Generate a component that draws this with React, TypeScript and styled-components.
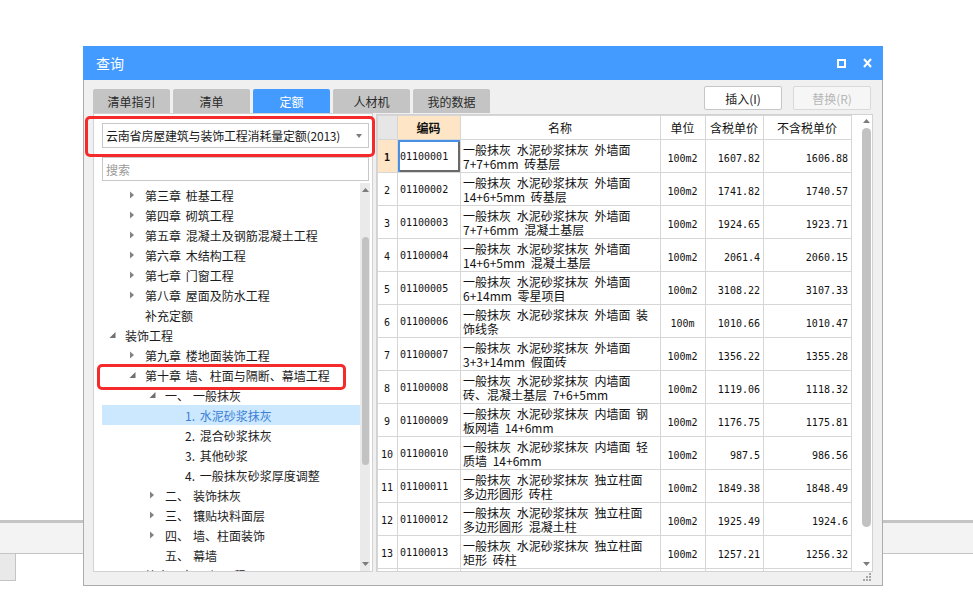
import React from "react";
import styled, { createGlobalStyle } from "styled-components";

type TreeItem = {
    depth: number;
    arrow?: "right" | "down";
    prefix?: string;
    text: string;
    selected?: boolean;
    marked?: boolean;
};

type QuotaRow = {
    n: number;
    code: string;
    l1: string;
    l2: string;
    unit: string;
    tax: string;
    notax: string;
};

const tree: TreeItem[] = [
    { depth: 1, arrow: "right", text: "第三章 桩基工程" },
    { depth: 1, arrow: "right", text: "第四章 砌筑工程" },
    { depth: 1, arrow: "right", text: "第五章 混凝土及钢筋混凝土工程" },
    { depth: 1, arrow: "right", text: "第六章 木结构工程" },
    { depth: 1, arrow: "right", text: "第七章 门窗工程" },
    { depth: 1, arrow: "right", text: "第八章 屋面及防水工程" },
    { depth: 1, text: "补充定额" },
    { depth: 0, arrow: "down", text: "装饰工程" },
    { depth: 1, arrow: "right", text: "第九章 楼地面装饰工程" },
    { depth: 1, arrow: "down", text: "第十章 墙、柱面与隔断、幕墙工程", marked: true },
    { depth: 2, arrow: "down", prefix: "一、", text: "一般抹灰" },
    { depth: 3, text: "1. 水泥砂浆抹灰", selected: true },
    { depth: 3, text: "2. 混合砂浆抹灰" },
    { depth: 3, text: "3. 其他砂浆" },
    { depth: 3, text: "4. 一般抹灰砂浆厚度调整" },
    { depth: 2, arrow: "right", prefix: "二、", text: "装饰抹灰" },
    { depth: 2, arrow: "right", prefix: "三、", text: "镶贴块料面层" },
    { depth: 2, arrow: "right", prefix: "四、", text: "墙、柱面装饰" },
    { depth: 2, prefix: "五、", text: "幕墙" },
    { depth: 1, arrow: "right", text: "第十一章 天棚工程" },
];

const base = "一般抹灰 水泥砂浆抹灰 ";

const rows: QuotaRow[] = [
    { n: 1, code: "01100001", l1: base + "外墙面", l2: "7+7+6mm 砖基层", unit: "100m2", tax: "1607.82", notax: "1606.88" },
    { n: 2, code: "01100002", l1: base + "外墙面", l2: "14+6+5mm 砖基层", unit: "100m2", tax: "1741.82", notax: "1740.57" },
    { n: 3, code: "01100003", l1: base + "外墙面", l2: "7+7+6mm 混凝土基层", unit: "100m2", tax: "1924.65", notax: "1923.71" },
    { n: 4, code: "01100004", l1: base + "外墙面", l2: "14+6+5mm 混凝土基层", unit: "100m2", tax: "2061.4", notax: "2060.15" },
    { n: 5, code: "01100005", l1: base + "外墙面", l2: "6+14mm 零星项目", unit: "100m2", tax: "3108.22", notax: "3107.33" },
    { n: 6, code: "01100006", l1: base + "外墙面 装", l2: "饰线条", unit: "100m", tax: "1010.66", notax: "1010.47" },
    { n: 7, code: "01100007", l1: base + "外墙面", l2: "3+3+14mm 假面砖", unit: "100m2", tax: "1356.22", notax: "1355.28" },
    { n: 8, code: "01100008", l1: base + "内墙面", l2: "砖、混凝土基层 7+6+5mm", unit: "100m2", tax: "1119.06", notax: "1118.32" },
    { n: 9, code: "01100009", l1: base + "内墙面 钢", l2: "板网墙 14+6mm", unit: "100m2", tax: "1176.75", notax: "1175.81" },
    { n: 10, code: "01100010", l1: base + "内墙面 轻", l2: "质墙 14+6mm", unit: "100m2", tax: "987.5", notax: "986.56" },
    { n: 11, code: "01100011", l1: base + "独立柱面", l2: "多边形圆形 砖柱", unit: "100m2", tax: "1849.38", notax: "1848.49" },
    { n: 12, code: "01100012", l1: base + "独立柱面", l2: "多边形圆形 混凝土柱", unit: "100m2", tax: "1925.49", notax: "1924.6" },
    { n: 13, code: "01100013", l1: base + "独立柱面", l2: "矩形 砖柱", unit: "100m2", tax: "1257.21", notax: "1256.32" },
];

const tabs = ["清单指引", "清单", "定额", "人材机", "我的数据"];

const GlobalStyle = createGlobalStyle`
    html, body {
        margin: 0;
        padding: 0;
        background: #ffffff;
    }
    body {
        font-family: "Noto Sans CJK SC", "Noto Sans", sans-serif;
        font-size: 12px;
        color: #202020;
    }
    * {
        box-sizing: border-box;
    }
`;

const Desktop = styled.div`
    position: relative;
    width: 973px;
    height: 615px;
    overflow: hidden;
    background: #ffffff;
`;

// the app window lying behind the dialog
const BackBar = styled.div`
    margin-top: 520px;
    height: 34px;
    background: #f3f3f3;
    border-top: 3px solid #c4c4c4;
    border-bottom: 1px solid #c4c4c4;
`;

const BackTab = styled.div`
    width: 16px;
    height: 27px;
    background: #e9e9e9;
    border-right: 1px solid #c4c4c4;
    border-bottom: 1px solid #c4c4c4;
`;

const Dialog = styled.div`
    position: absolute;
    left: 83px;
    top: 46px;
    width: 800px;
    height: 540px;
    display: flex;
    flex-direction: column;
    background: #f0f0f0;
    border: 1px solid #acacac;
    border-top: none;
`;

const TitleBar = styled.div`
    height: 34px;
    margin: 0 -1px;
    padding: 0 11px 0 13px;
    display: flex;
    align-items: center;
    background: #449bff;
    color: #ffffff;
    font-size: 14px;
`;

const Title = styled.span`
    flex: 1;
`;

const TitleIcons = styled.div`
    display: flex;
    align-items: center;
    gap: 17px;
`;

const Body = styled.div`
    flex: 1;
    display: flex;
    flex-direction: column;
    padding: 6px 9px 0;
`;

const TopRow = styled.div`
    height: 27px;
    display: flex;
`;

const Tabs = styled.div`
    align-self: flex-end;
    display: flex;
    gap: 3px;
`;

const Tab = styled.div<{ $active?: boolean }>`
    width: 77px;
    height: 24px;
    display: flex;
    align-items: center;
    justify-content: center;
    border-radius: 2px 2px 0 0;
    background: ${({ $active }) => ($active ? "#449bff" : "#c4c4c4")};
    color: ${({ $active }) => ($active ? "#ffffff" : "#2a2a2a")};
`;

const Actions = styled.div`
    margin-left: auto;
    margin-right: 2px;
    display: flex;
    gap: 11px;
    align-self: flex-start;
`;

const Button = styled.button`
    width: 78px;
    height: 24px;
    padding: 0;
    font: inherit;
    color: #222222;
    background: #ffffff;
    border: 1px solid #c6c6c6;
    border-radius: 2px;

    &:disabled {
        color: #b6b6b6;
        background: #f6f6f6;
        border-color: #d9d9d9;
    }
`;

const Content = styled.div`
    height: 459px;
    display: flex;
    gap: 3px;
`;

const LeftPanel = styled.div`
    width: 280px;
    display: flex;
    flex-direction: column;
    background: #ffffff;
    border: 1px solid #d2d2d2;
`;

const DropWrap = styled.div`
    position: relative;
    margin: 9px 3px 0 8px;
`;

const Dropdown = styled.div`
    height: 25px;
    display: flex;
    align-items: center;
    justify-content: space-between;
    padding: 0 6px 0 3px;
    border: 1px solid #c8c8c8;
    background: #ffffff;
    color: #1a1a1a;
    white-space: nowrap;
    letter-spacing: -0.2px;
`;

const Highlight = styled.div<{ $top: number; $left: number; $width: number; $height: number }>`
    position: absolute;
    top: ${({ $top }) => $top}px;
    left: ${({ $left }) => $left}px;
    width: ${({ $width }) => $width}px;
    height: ${({ $height }) => $height}px;
    border: 3px solid #f52a2a;
    border-radius: 5px;
    pointer-events: none;
    z-index: 2;
`;

const Search = styled.input`
    height: 24px;
    margin: 9px 3px 0 8px;
    padding: 0 3px;
    font: inherit;
    border: 1px solid #c8c8c8;
    outline: none;

    &::placeholder {
        color: #9a9a9a;
    }
`;

const Tree = styled.div`
    flex: 1;
    display: flex;
    min-height: 0;
    margin: 2px 2px 0 0;
    padding-left: 8px;
    overflow: hidden;
`;

const TreeRows = styled.div`
    flex: 1;
    padding-top: 2px;
`;

const TreeRow = styled.div<{ $depth: number; $selected?: boolean }>`
    position: relative;
    height: 20px;
    display: flex;
    align-items: center;
    padding-left: ${({ $depth }) => 7 + $depth * 20}px;
    white-space: nowrap;
    word-spacing: 2px;
    background: ${({ $selected }) => ($selected ? "#cce8ff" : "transparent")};
    color: ${({ $selected }) => ($selected ? "#3b7fd6" : "#1c1c1c")};
`;

const ArrowBox = styled.svg`
    width: 16px;
    height: 20px;
    flex: none;
`;

const Prefix = styled.span`
    display: inline-block;
    width: 28px;
`;

const ScrollBar = styled.div<{ $width: number; $track: string }>`
    width: ${({ $width }) => $width}px;
    flex: none;
    display: flex;
    flex-direction: column;
    background: ${({ $track }) => $track};
`;

const ScrollButton = styled.div<{ $height: number }>`
    height: ${({ $height }) => $height}px;
    display: flex;
    align-items: center;
    justify-content: center;
`;

const Thumb = styled.div<{ $offset: number; $length: number; $size: number }>`
    width: ${({ $size }) => $size}px;
    height: ${({ $length }) => $length}px;
    margin: ${({ $offset }) => $offset}px auto 0;
    border-radius: 5px;
    background: #c2c2c2;
`;

const Spacer = styled.div`
    flex: 1;
`;

const RightPanel = styled.div`
    flex: 1;
    display: flex;
    margin-top: 1px;
    background: #ffffff;
    border: 1px solid #d2d2d2;
`;

const TableArea = styled.div`
    flex: 1;
    overflow: hidden;
`;

const Table = styled.div`
    width: 475px;
    border-left: 1px solid #d6d6d6;
    border-top: 1px solid #d6d6d6;
    color: #111111;
`;

const GridRow = styled.div<{ $height: number }>`
    display: grid;
    grid-template-columns: 20px 63px 200px 45px 58px 88px;
    height: ${({ $height }) => $height}px;
`;

const Cell = styled.div<{ $align?: "left" | "center" | "right"; $bg?: string; $bold?: boolean; $mono?: boolean; $pad?: number }>`
    display: flex;
    align-items: center;
    justify-content: ${({ $align }) =>
        $align === "left" ? "flex-start" : $align === "right" ? "flex-end" : "center"};
    padding: ${({ $pad }) => $pad ?? 0}px 3px 0 2px;
    border-right: 1px solid #d6d6d6;
    border-bottom: 1px solid #d6d6d6;
    background: ${({ $bg }) => $bg ?? "#ffffff"};
    font-weight: ${({ $bold }) => ($bold ? 700 : 400)};
    font-family: ${({ $mono }) =>
        $mono ? '"DejaVu Sans Mono", "Liberation Mono", monospace' : "inherit"};
    font-size: ${({ $mono }) => ($mono ? "10px" : "12px")};
    white-space: nowrap;
    overflow: hidden;
`;

const FocusCell = styled(Cell)`
    box-shadow: inset 2px 2px 0 #4a90e2, inset -2px -2px 0 #6a6a6a;
`;

const NameCell = styled.div`
    padding: 3px 2px 0 2px;
    border-right: 1px solid #d6d6d6;
    border-bottom: 1px solid #d6d6d6;
    line-height: 14px;
    word-spacing: 3px;
    white-space: nowrap;
    overflow: hidden;
`;

const Footer = styled.div`
    height: 13px;
    display: flex;
    justify-content: flex-end;
    padding-right: 1px;
`;

const Arrow: React.FC<{ dir?: "right" | "down" }> = ({ dir }) => (
    <ArrowBox viewBox="0 0 16 20">
        {dir === "right" && <polygon points="1,6.5 5,10 1,13.5" fill="#828282" />}
        {dir === "down" && <polygon points="6.5,7 6.5,13 0.5,13" fill="#707070" />}
    </ArrowBox>
);

const Caret: React.FC<{ up?: boolean; w?: number }> = ({ up, w = 7 }) => (
    <svg width={w} height="4" viewBox={`0 0 ${w} 4`}>
        <polygon points={up ? `0,4 ${w / 2},0 ${w},4` : `0,0 ${w},0 ${w / 2},4`} fill="#7c7c7c" />
    </svg>
);

const App: React.FC = () => {
    return (
        <Desktop>
            <GlobalStyle />
            <BackBar />
            <BackTab />
            <Dialog>
                <TitleBar>
                    <Title>查询</Title>
                    <TitleIcons>
                        <svg width="9" height="9" viewBox="0 0 9 9">
                            <rect x="1" y="1" width="7" height="7" fill="none" stroke="#fff" strokeWidth="2" />
                        </svg>
                        <svg width="9" height="10" viewBox="0 0 9 10">
                            <path d="M1 1 L8 9 M8 1 L1 9" stroke="#fff" strokeWidth="2" />
                        </svg>
                    </TitleIcons>
                </TitleBar>
                <Body>
                    <TopRow>
                        <Tabs>
                            {tabs.map((t) => (
                                <Tab key={t} $active={t === "定额"}>
                                    {t}
                                </Tab>
                            ))}
                        </Tabs>
                        <Actions>
                            <Button>插入(I)</Button>
                            <Button disabled>替换(R)</Button>
                        </Actions>
                    </TopRow>
                    <Content>
                        <LeftPanel>
                            <DropWrap>
                                <Dropdown>
                                    <span>云南省房屋建筑与装饰工程消耗量定额(2013)</span>
                                    <Caret w={6} />
                                </Dropdown>
                                <Highlight $top={-7} $left={-17} $width={290} $height={41} />
                            </DropWrap>
                            <Search placeholder="搜索" />
                            <Tree>
                                <TreeRows>
                                    {tree.map((item) => (
                                        <TreeRow key={item.text} $depth={item.depth} $selected={item.selected}>
                                            <Arrow dir={item.arrow} />
                                            {item.prefix && <Prefix>{item.prefix}</Prefix>}
                                            {item.text}
                                            {item.marked && (
                                                <Highlight $top={-1} $left={-5} $width={249} $height={26} />
                                            )}
                                        </TreeRow>
                                    ))}
                                </TreeRows>
                                <ScrollBar $width={10} $track="#eaeaea">
                                    <ScrollButton $height={14}>
                                        <Caret up />
                                    </ScrollButton>
                                    <Thumb $offset={40} $length={228} $size={7} />
                                    <Spacer />
                                    <ScrollButton $height={14}>
                                        <Caret />
                                    </ScrollButton>
                                </ScrollBar>
                            </Tree>
                        </LeftPanel>
                        <RightPanel>
                            <TableArea>
                                <Table>
                                    <GridRow $height={24}>
                                        <Cell $bg="#e6e6e6" />
                                        <Cell $bg="#fde5c6" $bold>
                                            编码
                                        </Cell>
                                        <Cell>名称</Cell>
                                        <Cell>单位</Cell>
                                        <Cell>含税单价</Cell>
                                        <Cell>不含税单价</Cell>
                                    </GridRow>
                                    {rows.map((r) => {
                                        const first = r.n === 1;
                                        const CodeCell = first ? FocusCell : Cell;
                                        return (
                                            <GridRow key={r.code} $height={33}>
                                                <Cell $mono $bold={first} $bg={first ? "#fde5c6" : undefined} $pad={2}>
                                                    {r.n}
                                                </Cell>
                                                <CodeCell $mono $align="left" $pad={1}>
                                                    {r.code}
                                                </CodeCell>
                                                <NameCell>
                                                    <div>{r.l1}</div>
                                                    <div>{r.l2}</div>
                                                </NameCell>
                                                <Cell $mono $pad={4}>
                                                    {r.unit}
                                                </Cell>
                                                <Cell $mono $align="right" $pad={4}>
                                                    {r.tax}
                                                </Cell>
                                                <Cell $mono $align="right" $pad={4}>
                                                    {r.notax}
                                                </Cell>
                                            </GridRow>
                                        );
                                    })}
                                    <GridRow $height={33}>
                                        <Cell />
                                        <Cell />
                                        <Cell />
                                        <Cell />
                                        <Cell />
                                        <Cell />
                                    </GridRow>
                                </Table>
                            </TableArea>
                            <ScrollBar $width={12} $track="#ffffff">
                                <ScrollButton $height={12}>
                                    <Caret up />
                                </ScrollButton>
                                <Thumb $offset={1} $length={399} $size={9} />
                                <Spacer />
                                <ScrollButton $height={14}>
                                    <Caret />
                                </ScrollButton>
                            </ScrollBar>
                        </RightPanel>
                    </Content>
                    <Footer>
                        <svg width="10" height="10" viewBox="0 0 10 10">
                            {[
                                [7, 1],
                                [4, 4],
                                [7, 4],
                                [1, 7],
                                [4, 7],
                                [7, 7],
                            ].map(([x, y]) => (
                                <rect key={`${x}-${y}`} x={x} y={y} width="2" height="2" fill="#a6a6a6" />
                            ))}
                        </svg>
                    </Footer>
                </Body>
            </Dialog>
        </Desktop>
    );
};

export default App;
